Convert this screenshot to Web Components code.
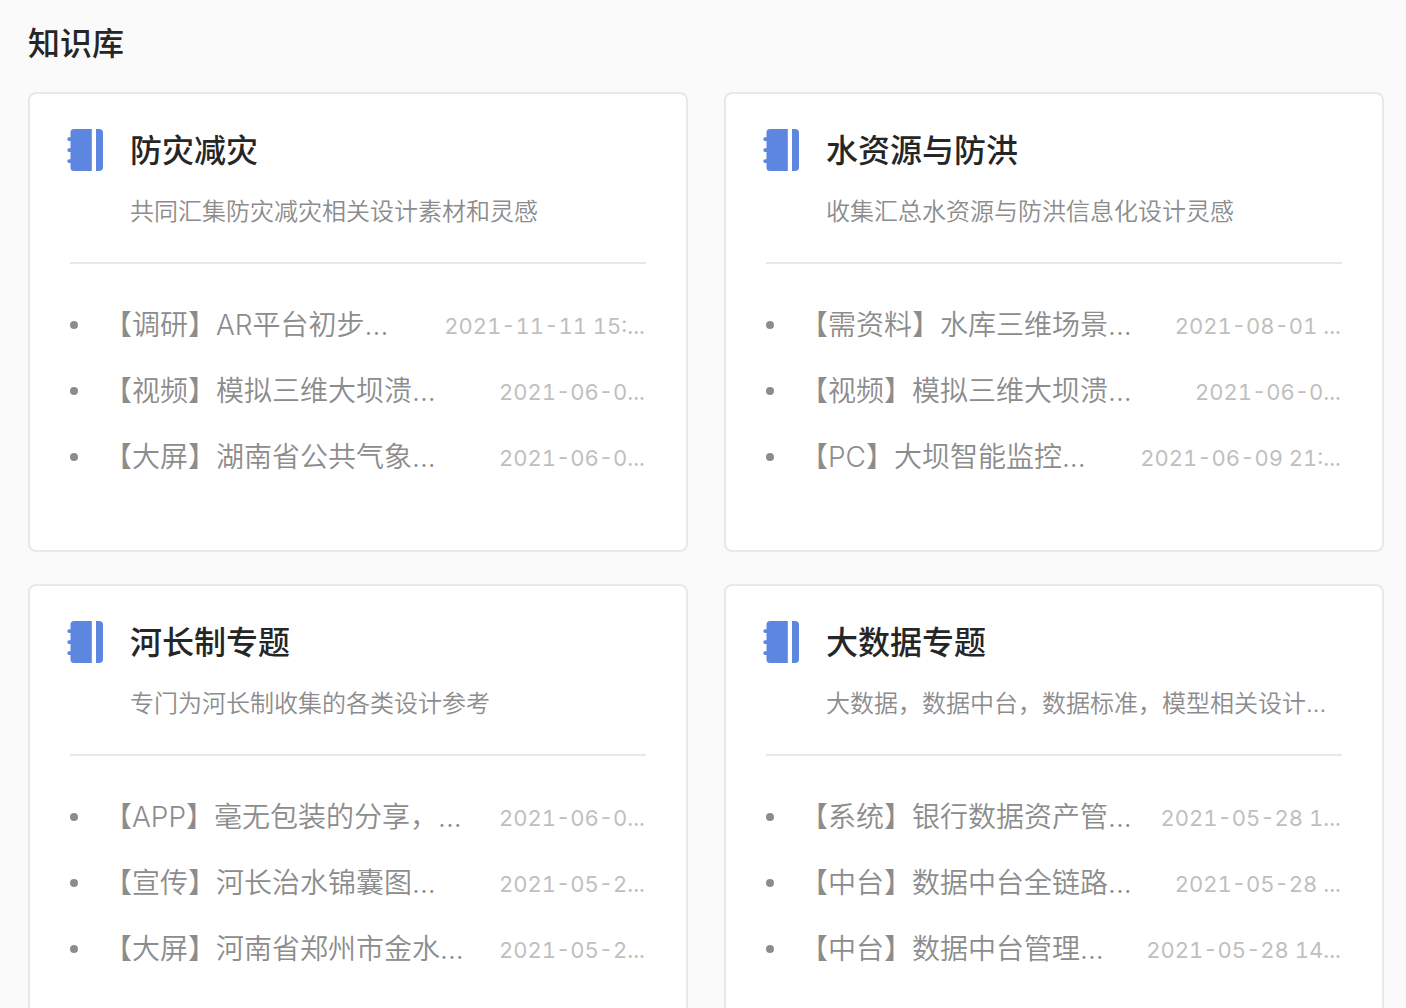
<!DOCTYPE html>
<html lang="zh-CN">
<head>
<meta charset="utf-8">
<meta name="viewport" content="width=device-width, initial-scale=1">
<title>知识库</title>
<style>
  body { margin: 0; background: #fafafa; color: #262626; font-family: Inter, "Noto Sans CJK SC", sans-serif; }
</style>
</head>
<body>
<kb-page heading="知识库">
  <kb-card heading="防灾减灾" summary="共同汇集防灾减灾相关设计素材和灵感">
    <kb-item date="2021-11-11 15:...">【调研】AR平台初步...</kb-item>
    <kb-item date="2021-06-0...">【视频】模拟三维大坝溃...</kb-item>
    <kb-item date="2021-06-0...">【大屏】湖南省公共气象...</kb-item>
  </kb-card>
  <kb-card heading="水资源与防洪" summary="收集汇总水资源与防洪信息化设计灵感">
    <kb-item date="2021-08-01 ...">【需资料】水库三维场景...</kb-item>
    <kb-item date="2021-06-0...">【视频】模拟三维大坝溃...</kb-item>
    <kb-item date="2021-06-09 21:...">【PC】大坝智能监控...</kb-item>
  </kb-card>
  <kb-card heading="河长制专题" summary="专门为河长制收集的各类设计参考">
    <kb-item date="2021-06-0...">【APP】毫无包装的分享，...</kb-item>
    <kb-item date="2021-05-2...">【宣传】河长治水锦囊图...</kb-item>
    <kb-item date="2021-05-2...">【大屏】河南省郑州市金水...</kb-item>
  </kb-card>
  <kb-card heading="大数据专题" summary="大数据，数据中台，数据标准，模型相关设计...">
    <kb-item date="2021-05-28 1...">【系统】银行数据资产管...</kb-item>
    <kb-item date="2021-05-28 ...">【中台】数据中台全链路...</kb-item>
    <kb-item date="2021-05-28 14...">【中台】数据中台管理...</kb-item>
  </kb-card>
</kb-page>

<script>
  class KbElement extends HTMLElement {
    connectedCallback() {
      if (this.shadowRoot) return;
      this.attachShadow({ mode: 'open' }).innerHTML = this.constructor.markup;
      this.shadowRoot.querySelectorAll('[data-text]').forEach(node => {
        node.textContent = this.getAttribute(node.dataset.text) || '';
      });
    }
  }

  class KbPage extends KbElement {
    static markup = `
      <style>
        :host { display: block; box-sizing: border-box; height: 100vh; padding: 20px 22px 32px 28px; overflow-y: auto; scrollbar-width: none; }
        h1 { margin: 0 0 24px; font-size: 32px; line-height: 48px; font-weight: 500; }
        .grid { display: grid; grid-template-columns: repeat(2, minmax(0, 1fr)); gap: 32px 36px; }
      </style>
      <h1 data-text="heading"></h1>
      <div class="grid"><slot></slot></div>`;
  }

  class KbIcon extends KbElement {
    static markup = `
      <style>
        :host { display: block; flex: none; width: 40px; height: 48px; }
        svg { display: block; }
      </style>
      <svg width="40" height="48" viewBox="0 0 40 48" fill="#5c86e0" aria-hidden="true">
        <path d="M8 3H25.8V45H8Q4.5 45 4.5 41.500V37H3.200A1.900 1.900 0 0 1 3.200 33.200H4.500V26H3.200A1.900 1.900 0 0 1 3.200 22.200H4.500V15H3.200A1.900 1.900 0 0 1 3.200 11.200H4.500V6.500Q4.500 3 8 3Z"/>
        <path d="M30 3H33Q37 3 37 7V41Q37 45 33 45H30Z"/>
      </svg>`;
  }

  class KbCard extends KbElement {
    static markup = `
      <style>
        :host { display: block; box-sizing: border-box; padding: 32px 36px 60px; background: #fff; border: 2px solid #e8e8e8; border-radius: 8px; }
        header { display: flex; gap: 24px; }
        .text { min-width: 0; }
        h2 { margin: 0 0 18px; font-size: 32px; line-height: 50px; font-weight: 500; }
        p { margin: 0; font-size: 24px; line-height: 36px; font-weight: 350; color: #8c8c8c; white-space: nowrap; }
        .list { margin: 32px 4px 0; padding-top: 28px; border-top: 2px solid #e8e8e8; }
      </style>
      <header>
        <kb-icon></kb-icon>
        <div class="text">
          <h2 data-text="heading"></h2>
          <p data-text="summary"></p>
        </div>
      </header>
      <div class="list" role="list"><slot></slot></div>`;
  }

  class KbItem extends KbElement {
    static markup = `
      <style>
        :host { display: flex; align-items: center; height: 66px; line-height: 66px; color: #8c8c8c; white-space: nowrap; }
        .dot { flex: none; width: 8px; height: 8px; margin-right: 26px; border-radius: 50%; background: currentColor; }
        a { flex: 1; min-width: 0; font-size: 28px; font-weight: 350; color: inherit; text-decoration: none; }
        time { flex: none; padding: 2px 1px 0 0; font-size: 22px; color: #bfbfbf; font-variant-numeric: tabular-nums; }
      </style>
      <span class="dot"></span>
      <a href="#"><slot></slot></a>
      <time data-text="date"></time>`;
    connectedCallback() {
      super.connectedCallback();
      this.setAttribute('role', 'listitem');
    }
  }

  customElements.define('kb-page', KbPage);
  customElements.define('kb-icon', KbIcon);
  customElements.define('kb-card', KbCard);
  customElements.define('kb-item', KbItem);
</script>
</body>
</html>
